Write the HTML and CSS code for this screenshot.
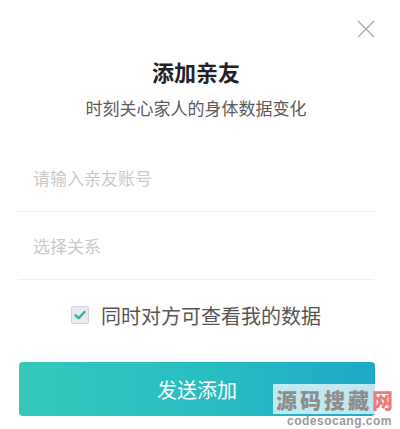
FILE: index.html
```html
<!DOCTYPE html>
<html lang="zh-CN">

<head>
    <meta charset="UTF-8">
    <meta name="viewport" content="width=device-width, initial-scale=1.0">
    <title>添加亲友</title>
    <link rel="stylesheet" href="styles.css">
</head>

<body>
    <div class="dialog">
        <button class="close" type="button" aria-label="关闭">
            <svg width="18" height="18" viewBox="0 0 18 18">
                <path d="M1 1L17 17M17 1L1 17" stroke="#a8a8a8" stroke-width="1.4" fill="none" />
            </svg>
        </button>

        <h2 class="title">添加亲友</h2>
        <p class="sub">时刻关心家人的身体数据变化</p>

        <div class="field">
            <input type="text" placeholder="请输入亲友账号">
        </div>
        <div class="field">
            <input type="text" placeholder="选择关系">
        </div>

        <label class="share">
            <span class="cb">
                <svg width="14" height="14" viewBox="0 0 14 14">
                    <path d="M2.5 7.2L5.6 10.2L11.6 3.8" stroke="#22b2a2" stroke-width="2.2" fill="none"
                        stroke-linecap="round" stroke-linejoin="round" />
                </svg>
            </span>
            同时对方可查看我的数据
        </label>

        <button class="send" type="button">发送添加</button>
    </div>

    <div class="mark">
        <div class="mark-name">源码搜藏<span class="mark-red">网</span></div>
        <div class="mark-url">codesocang.com</div>
    </div>
</body>

</html>
```

FILE: styles.css
```css
* {
    box-sizing: border-box;
}

body {
    margin: 0;
    width: 400px;
    height: 429px;
    overflow: hidden;
    background: #fff;
    font-family: "Noto Sans CJK SC", "Noto Sans", sans-serif;
    position: relative;
}

.dialog {
    position: relative;
    padding: 56px 26px 0 18px;
}

.close {
    position: absolute;
    top: 20px;
    right: 25px;
    width: 18px;
    height: 18px;
    padding: 0;
    border: 0;
    background: none;
    display: flex;
}

.title {
    margin: 0;
    text-align: center;
    font-size: 22px;
    line-height: 30px;
    font-weight: bold;
    color: #222;
}

.sub {
    margin: 10px 0 0;
    text-align: center;
    font-size: 17px;
    line-height: 24px;
    color: #5a5a5a;
}

.field {
    height: 68px;
    border-bottom: 1px solid #efefef;
    display: flex;
    align-items: center;
}

.field:first-of-type {
    margin-top: 24px;
}

.field input {
    width: 100%;
    border: 0;
    outline: none;
    padding: 0 0 0 15px;
    font-family: inherit;
    font-size: 17px;
    line-height: 24px;
    color: #333;
    background: transparent;
}

.field input::placeholder {
    color: #c9c9c9;
}

.share {
    margin-top: 21px;
    height: 28px;
    display: flex;
    align-items: center;
    justify-content: center;
    gap: 12px;
    font-size: 20px;
    color: #555;
}

.cb {
    width: 18px;
    height: 18px;
    border: 1px solid #d4d5da;
    border-radius: 2px;
    background: #e9eaee;
    display: flex;
    align-items: center;
    justify-content: center;
}

.send {
    display: block;
    width: 100%;
    margin: 33px 0 0 1px;
    height: 54px;
    border: 0;
    border-radius: 4px;
    background: linear-gradient(90deg, #34c8bc, #27bcc0 55%, #1fa8c7);
    color: #fff;
    font-family: inherit;
    font-size: 20px;
}

.mark {
    position: absolute;
    left: 273px;
    top: 384px;
    width: 127px;
}

.mark-name {
    padding-left: 3px;
    background: rgba(255, 255, 255, 0.72);
    font-size: 21px;
    line-height: normal;
    letter-spacing: 3px;
    font-weight: 900;
    color: #8d8d8d;
}

.mark-red {
    color: #ec7b7b;
}

.mark-url {
    padding-left: 14px;
    font-family: "Liberation Sans", sans-serif;
    font-size: 12px;
    line-height: normal;
    letter-spacing: 0.5px;
    font-weight: bold;
    color: #9a9a9a;
}
```
